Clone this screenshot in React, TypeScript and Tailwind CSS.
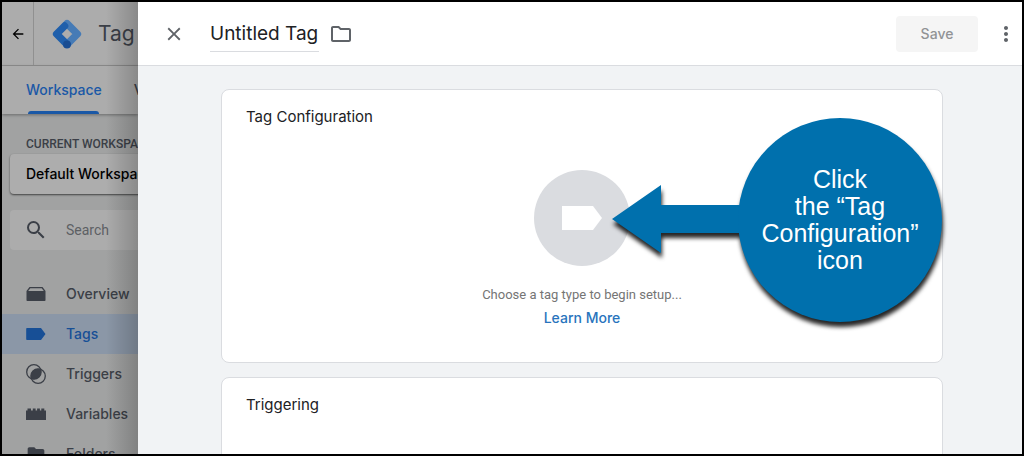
import React from 'react'
import { MdArrowBack, MdClose, MdFolder, MdMoreVert, MdOutlineFolder, MdSearch } from 'react-icons/md'

const Logo = () => (
  <svg viewBox="0 0 30 30" className="size-[30px] shrink-0" fill="none" strokeWidth="7.4" strokeLinejoin="round" strokeLinecap="round" aria-hidden="true">
    <path d="M15 4.6 L25.4 15 L15 25.4" stroke="#467bb6" />
    <path d="M12.6 7 L4.6 15 L15 25.4" stroke="#1f5fab" />
    <circle cx="15" cy="25.4" r="3.9" fill="#184c92" />
  </svg>
)

const OverviewIcon = () => (
  <svg viewBox="0 0 20 20" className="size-5" fill="currentColor" aria-hidden="true">
    <path d="M3.5 3h13l3 4v9.2a.8.8 0 0 1-.8.8H1.3a.8.8 0 0 1-.8-.8V7zM4.3 4.2 2.2 7h15.6l-2.1-2.8z" fillRule="evenodd" />
  </svg>
)

const TagIcon = () => (
  <svg viewBox="0 0 20 20" className="size-5" fill="currentColor" aria-hidden="true">
    <path d="M1 4h14l4.5 6-4.5 6H1a.8.8 0 0 1-.8-.8V4.8A.8.8 0 0 1 1 4z" />
  </svg>
)

const TriggerIcon = () => (
  <svg viewBox="0 0 20 20" className="size-5" fill="none" stroke="currentColor" strokeWidth="1.3" aria-hidden="true">
    <circle cx="7.9" cy="7.9" r="7.2" />
    <circle cx="12.1" cy="12.1" r="7.2" />
    <path d="M14.64 5.36A7.2 7.2 0 0 0 5.36 14.64A7.2 7.2 0 0 0 14.64 5.36z" fill="currentColor" stroke="none" />
  </svg>
)

const VariableIcon = () => (
  <svg viewBox="0 0 20 20" className="size-5" fill="currentColor" aria-hidden="true">
    <path d="M0 6.5h1.5V4.5h3.5v2h1.8V4.5h2.8v2h1.5V4.5h2.8v2h1.4V4.5h3v2H20V16H0z" />
  </svg>
)

const navItems = [
  { label: 'Overview', icon: <OverviewIcon /> },
  { label: 'Tags', icon: <TagIcon />, active: true },
  { label: 'Triggers', icon: <TriggerIcon /> },
  { label: 'Variables', icon: <VariableIcon /> },
  { label: 'Folders', icon: <MdFolder size={22} /> },
]

const Sidebar = () => (
  <aside className="relative w-[136px] shrink-0 overflow-hidden bg-[#a1a2a2] text-[#3b3f47]">
    <div className="flex h-16 items-center border-b border-[#909090] bg-[#acacac]">
      <button type="button" aria-label="Back" className="flex h-full w-8 shrink-0 items-center justify-center border-r border-[#909090] text-black">
        <MdArrowBack size={16} />
      </button>
      <div className="flex items-center gap-4 pl-[18px]">
        <Logo />
        <span className="text-[21px] whitespace-nowrap">Tag Manager</span>
      </div>
    </div>

    <div className="flex h-12 gap-8 bg-[#acacac] pl-6 text-sm font-medium shadow-[0_1px_3px_rgba(0,0,0,0.35)]">
      <button type="button" className="flex shrink-0 flex-col items-center text-[#1a58a6]">
        <span className="flex flex-1 items-center pt-0.5">Workspace</span>
        <span className="h-[3px] w-[71px] rounded-t-sm bg-[#1a58a6]" />
      </button>
      <button type="button" className="flex shrink-0 items-center pb-px">Versions</button>
    </div>

    <div className="w-64 px-2 pt-5">
      <p className="pl-4 font-['Roboto',sans-serif] text-xs leading-5 font-medium whitespace-nowrap">CURRENT WORKSPACE</p>
      <button type="button" className="flex h-10 w-full items-center rounded bg-[#adadad] pl-4 text-sm font-medium text-black shadow-[0_1px_2px_rgba(0,0,0,0.6)]">
        Default Workspace
      </button>
      <label className="mt-4 flex h-10 items-center gap-[18px] rounded bg-[#acacac] pl-[14px]">
        <MdSearch size={24} />
        <input
          type="text"
          aria-label="Search"
          placeholder="Search"
          className="w-40 bg-transparent font-['Roboto',sans-serif] text-sm outline-none placeholder:text-[#5d6064]"
        />
      </label>
    </div>

    <nav className="mt-6 w-64 text-sm font-medium">
      {navItems.map(({ label, icon, active }) => (
        <a
          key={label}
          href="#"
          className={`flex h-10 items-center gap-5 pl-6 ${active ? 'bg-[#8b97a7] text-[#174f96]' : ''}`}
        >
          <span className="flex w-5 justify-center">{icon}</span>
          {label}
        </a>
      ))}
    </nav>

    <div className="pointer-events-none absolute inset-y-0 right-0 w-8 bg-linear-to-r from-transparent to-black/20" />
  </aside>
)

const Callout = () => (
  <div className="pointer-events-none absolute top-7 left-1/2 ml-[30px] h-[204px] w-[330px]">
    <svg viewBox="0 0 330 204" className="overflow-visible drop-shadow-[1px_5px_2px_rgba(0,0,0,0.85)]" aria-hidden="true">
      <path d="M0 101 L49 67 V87 H140 V115 H49 V135 Z" fill="#0070ad" />
      <circle cx="228" cy="102" r="102" fill="#0070ad" />
    </svg>
    <p className="absolute inset-y-0 right-0 flex w-[204px] items-center justify-center text-center font-['Liberation_Sans',Arial,sans-serif] text-[25px] leading-[27px] text-white">
      <span>
        Click
        <br />
        the “Tag
        <br />
        Configuration”
        <br />
        icon
      </span>
    </p>
  </div>
)

const DrawerHeader = () => (
  <header className="flex h-16 shrink-0 items-center border-b border-[#dadce0] bg-white pl-6 text-[#5f6368]">
    <button type="button" aria-label="Close" className="mr-6 flex size-6 items-center justify-center">
      <MdClose size={22} />
    </button>
    <input
      type="text"
      aria-label="Tag name"
      defaultValue="Untitled Tag"
      className="h-9 w-[109px] border-b border-[#dadce0] text-[19px] text-[#202124] outline-none"
    />
    <button type="button" aria-label="Choose folder" className="ml-2.5">
      <MdOutlineFolder size={24} />
    </button>
    <button type="button" disabled className="ml-auto h-9 w-[82px] rounded bg-[#f5f5f5] text-sm font-medium text-[#919395]">
      Save
    </button>
    <button type="button" aria-label="More options" className="ml-3 flex w-8 justify-center">
      <MdMoreVert size={24} />
    </button>
  </header>
)

export default function App() {
  return (
    <div className="flex h-screen overflow-hidden border-2 border-black font-['Inter',sans-serif]">
      <Sidebar />
      <main className="flex min-w-0 flex-1 flex-col bg-[#f1f3f5]">
        <DrawerHeader />
        <div className="flex min-h-0 flex-1 flex-col gap-[14px] overflow-hidden pt-[23px] pr-[79px] pl-[83px]">
          <section className="relative shrink-0 rounded-lg border border-[#dadce0] bg-white px-6 pt-4 pb-8">
            <h2 className="text-[15px] leading-[22px] text-[#202124]">Tag Configuration</h2>
            <div className="mt-[42px] flex flex-col items-center">
              <button type="button" aria-label="Choose tag type" className="flex size-24 items-center justify-center rounded-full bg-[#dadce0]">
                <svg viewBox="0 0 40 24" className="h-6 w-10" aria-hidden="true">
                  <path d="M0 0h31l9 12-9 12H0z" fill="#fff" />
                </svg>
              </button>
              <p className="mt-[18px] font-['Roboto',sans-serif] text-[13px] leading-[22px] text-[#757575]">Choose a tag type to begin setup...</p>
              <a href="#" className="text-sm leading-6 font-medium text-[#2874bd]">Learn More</a>
            </div>
            <Callout />
          </section>
          <section className="h-40 shrink-0 rounded-lg border border-[#dadce0] bg-white px-6 pt-4">
            <h2 className="text-[15px] leading-[22px] text-[#202124]">Triggering</h2>
          </section>
        </div>
      </main>
    </div>
  )
}
